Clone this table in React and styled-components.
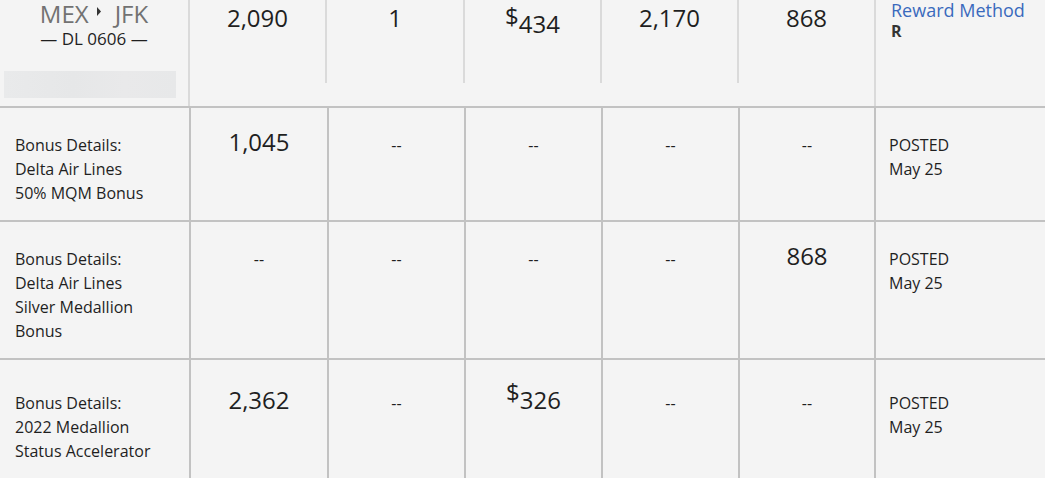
import React from 'react';
import styled, { createGlobalStyle } from 'styled-components';

const Global = createGlobalStyle`
  html, body { margin: 0; padding: 0; background: #f4f4f4; }
  body {
    font-family: "Open Sans", "Noto Sans", sans-serif;
    color: #222;
    width: 1045px;
    height: 478px;
    overflow: hidden;
  }
`;

const Page = styled.div`
  width: 1045px;
  background: #f4f4f4;
`;

const FlightRow = styled.div`
  display: flex;
  height: 106px;
`;

const RouteCell = styled.div`
  width: 188px;
  flex: none;
  display: flex;
  flex-direction: column;
  align-items: center;
`;

const Route = styled.div`
  font-size: 24px;
  line-height: 28px;
  color: #727272;
  white-space: nowrap;
`;

const Arrow = styled.svg`
  width: 4px;
  height: 9px;
  margin: 0 14px 0 8px;
  vertical-align: 7px;
`;

const FlightNo = styled.div`
  font-size: 17px;
  line-height: 22px;
  color: #1f1f1f;
  white-space: nowrap;
`;

const Redacted = styled.div`
  align-self: flex-start;
  margin: 21px 0 0 4px;
  width: 172px;
  height: 27px;
  background: linear-gradient(90deg, #e9eaeb, #e6e7e8 40%, #e9e9ea 70%, #e7e8e9);
`;

const ValueGroup = styled.div`
  display: flex;
  flex: none;
  border-left: 2px solid #dadada;
  border-right: 2px solid #dadada;
`;

const ValueCell = styled.div`
  width: ${p => p.$w}px;
  height: 83px;
  box-sizing: border-box;
  border-left: ${p => (p.$divider ? '2px solid #dadada' : 'none')};
  padding-top: 1px;
  text-align: center;
  font-size: 24px;
  line-height: 33px;
  color: #1f1f1f;
`;

const RewardCell = styled.div`
  flex: 1;
  padding-left: 15px;
`;

const RewardLink = styled.a`
  display: block;
  font-size: 18px;
  line-height: 20px;
  color: #3a6abd;
  text-decoration: none;
`;

const RewardCode = styled.div`
  font-size: 16px;
  line-height: 22px;
  font-weight: 700;
  color: #333;
`;

const Dollar = styled.span`
  position: relative;
  top: -2px;
  vertical-align: 6px;
`;

const Table = styled.table`
  border-collapse: collapse;
  table-layout: fixed;
  width: 1045px;
`;

const Td = styled.td`
  border: 2px solid #c2c2c2;
  vertical-align: baseline;
  padding: 18px 8px 15px;
  text-align: ${p => (p.$left ? 'left' : 'center')};
  font-size: ${p => (p.$big ? '24px' : '16px')};
  line-height: ${p => (p.$big ? '32px' : '24px')};
  color: #1f1f1f;
  &:first-child {
    border-left: none;
    padding-left: 15px;
  }
  &:last-child {
    border-right: none;
    padding-left: 13px;
  }
`;

const widths = [190, 138, 137, 137, 137, 136, 170];

const Money = ({ v }) => (
  <>
    <Dollar>$</Dollar>
    {v}
  </>
);

const rows = [
  {
    label: ['Bonus Details:', 'Delta Air Lines', '50% MQM Bonus'],
    vals: ['1,045', null, null, null, null],
  },
  {
    label: ['Bonus Details:', 'Delta Air Lines', 'Silver Medallion', 'Bonus'],
    vals: [null, null, null, null, '868'],
  },
  {
    label: ['Bonus Details:', '2022 Medallion', 'Status Accelerator'],
    vals: ['2,362', null, { money: '326' }, null, null],
  },
];

function Cell({ v }) {
  if (v == null) return <Td>--</Td>;
  if (typeof v === 'object') return <Td $big><Money v={v.money} /></Td>;
  return <Td $big>{v}</Td>;
}

export default function App() {
  const top = [
    { w: 135, v: '2,090' },
    { w: 138, v: '1', d: true },
    { w: 137, v: <Money v="434" />, d: true },
    { w: 137, v: '2,170', d: true },
    { w: 137, v: '868', d: true },
  ];
  return (
    <Page>
      <Global />
      <FlightRow>
        <RouteCell>
          <Route>
            MEX
            <Arrow viewBox="0 0 4 9">
              <path d="M0 0 L4 4.5 L0 9 Z" fill="#333" />
            </Arrow>
            JFK
          </Route>
          <FlightNo>— DL 0606 —</FlightNo>
          <Redacted />
        </RouteCell>
        <ValueGroup>
          {top.map((c, i) => (
            <ValueCell key={i} $w={c.w} $divider={c.d}>
              {c.v}
            </ValueCell>
          ))}
        </ValueGroup>
        <RewardCell>
          <RewardLink href="#">Reward Method</RewardLink>
          <RewardCode>R</RewardCode>
        </RewardCell>
      </FlightRow>
      <Table>
        <colgroup>
          {widths.map((w, i) => (
            <col key={i} style={{ width: w }} />
          ))}
        </colgroup>
        <tbody>
          {rows.map((r, i) => (
            <tr key={i}>
              <Td $left>
                {r.label.map((l, j) => (
                  <div key={j}>{l}</div>
                ))}
              </Td>
              {r.vals.map((v, j) => (
                <Cell key={j} v={v} />
              ))}
              <Td $left>
                <div>POSTED</div>
                <div>May 25</div>
              </Td>
            </tr>
          ))}
        </tbody>
      </Table>
    </Page>
  );
}
